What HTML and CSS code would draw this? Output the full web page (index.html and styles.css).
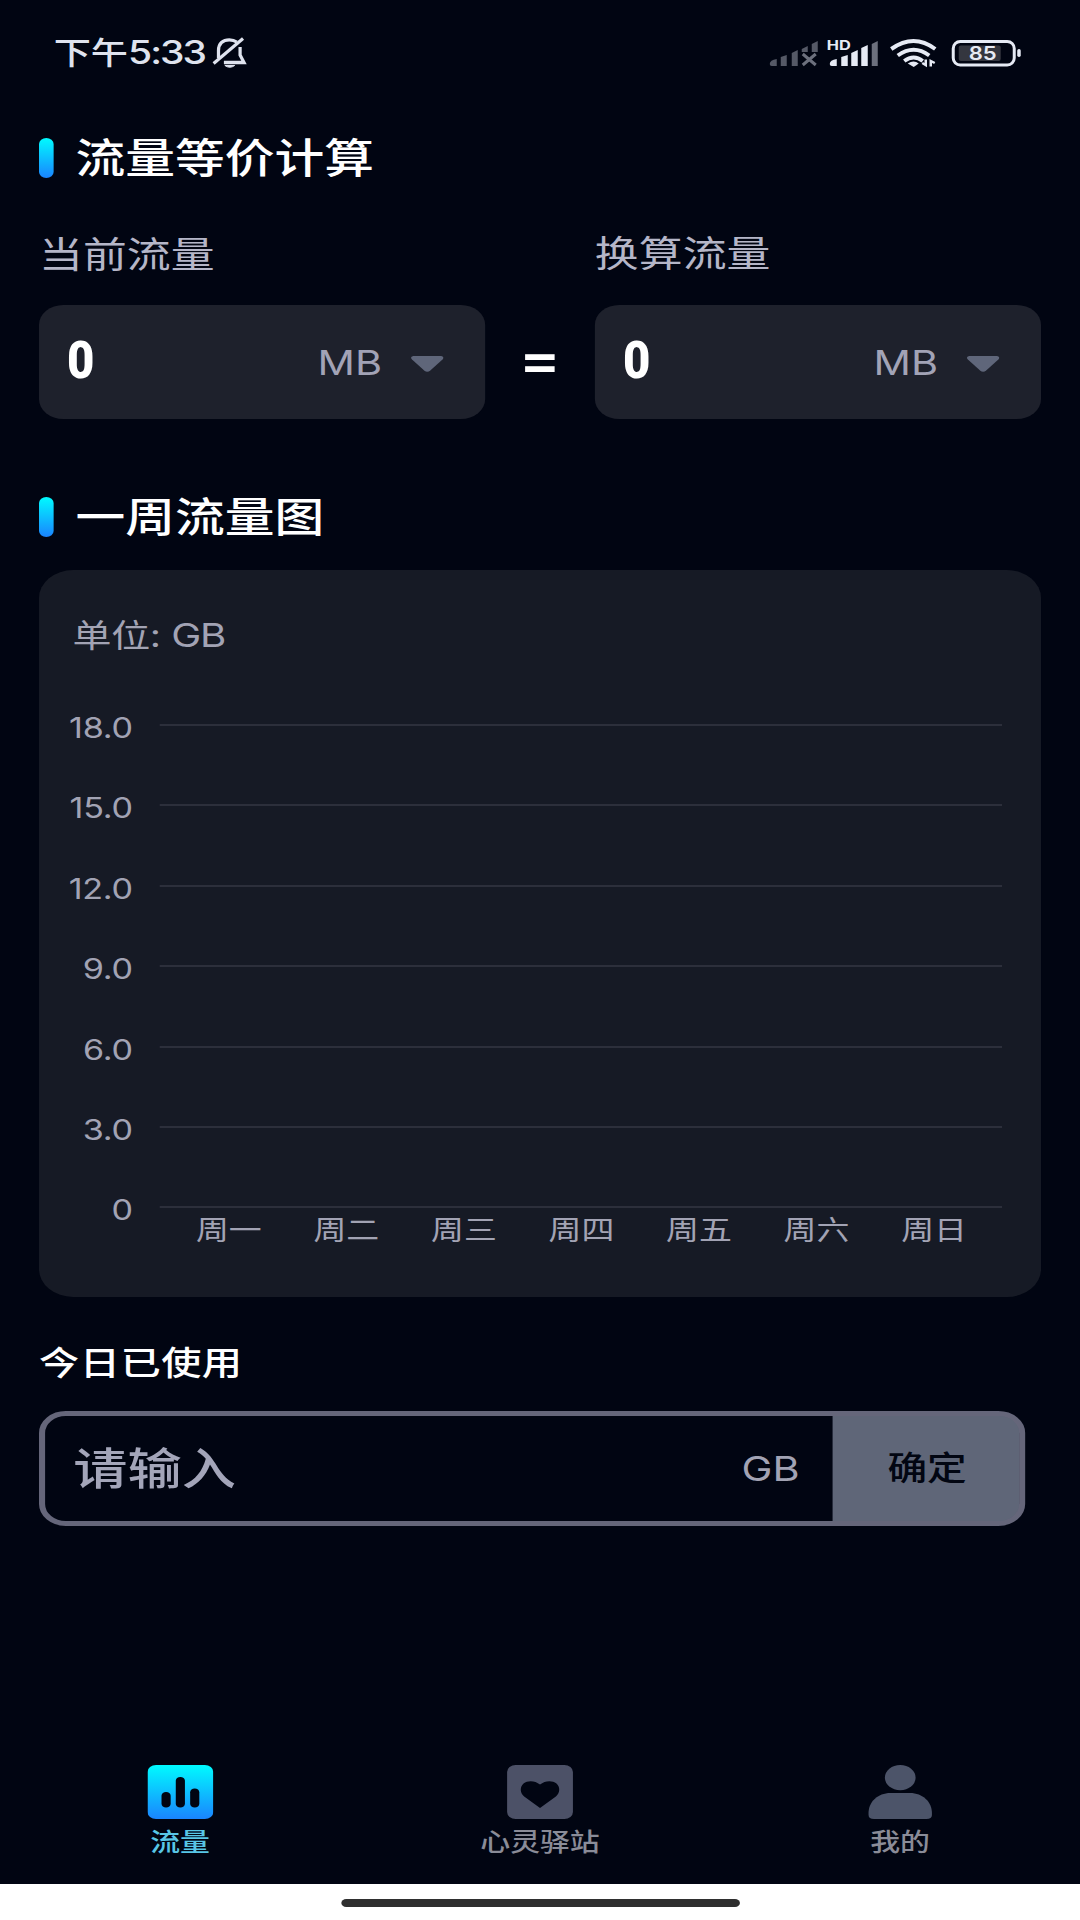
FILE: index.html
```html
<!doctype html>
<html lang="zh-CN">
<head>
<meta charset="utf-8">
<title>流量等价计算</title>
<link rel="stylesheet" href="styles.css">
</head>

<body>
<div class="phone">
    <!-- 状态栏 -->
    <div class="status">
        <div class="time">下午<span>5:33</span></div>
        <svg class="bell" viewBox="0 0 36 32" preserveAspectRatio="none" fill="none" stroke="#dfe3ee" stroke-width="3.300">
            <path d="M6.500 21V13.500C6.500 6.500 11 2.800 17.500 2.800C20.500 2.800 23 3.500 25 5M28.500 10V18L32.500 25.500H12"/>
            <path d="M1.500 26.500L31.500 1.500"/>
            <path d="M13 28.500H23Q18 32 13 28.500Z" fill="#dfe3ee" stroke-width="1"/>
        </svg>
        <svg class="signs" viewBox="0 0 256 40" preserveAspectRatio="none">
            <g transform="translate(0 5)">
            <g fill="#555966">
                <path d="M3 26Q3 22 10 21V28H5Q3 28 3 26Z"/>
                <path d="M14 19L20 17V28H14ZM25 15L31 12V28H25ZM35 11L41 8V14H35ZM45 6L51 3V14H45Z"/>
            </g>
            <path d="M36 16L49 27M49 16L36 27" stroke="#6c707d" stroke-width="3"/>
            <text class="hd" x="60" y="12" textLength="24" lengthAdjust="spacingAndGlyphs">HD</text>
            <g fill="#e6eaf4">
                <path d="M63 26Q63 22 70 21V28H65Q63 28 63 26Z"/>
                <path d="M74.500 19L81 17V28H74.500ZM84.500 15L91 12V28H84.500ZM94.500 10L101 7V28H94.500Z"/>
            </g>
            <path d="M105 6L111 3V28H105Z" fill="#6c707d"/>
            <g fill="none" stroke="#e6eaf4" stroke-width="4">
                <path d="M124.500 11Q147 -5 168.500 11"/>
                <path d="M131 17.500Q147 6 162.500 17.500"/>
                <path d="M137.500 23Q147 16 156 23"/>
            </g>
            <path d="M141 25.500Q147 21.500 152 25.500L147 29Z" fill="#e6eaf4"/>
            <path d="M155.500 25L159 27V21.500M164 28.500V23L168 25" fill="none" stroke="#e6eaf4" stroke-width="2.500"/>
            <rect x="186.500" y="3.500" width="61" height="23.500" rx="7" fill="none" stroke="#e6eaf4" stroke-width="3"/>
            <rect x="192" y="7.500" width="42" height="15.500" rx="2" fill="#34363f"/>
            <rect x="250.500" y="11" width="3.500" height="8" rx="1.700" fill="#e6eaf4"/>
            <text class="power" x="202" y="21.800" textLength="28" lengthAdjust="spacingAndGlyphs">85</text>
            </g>
        </svg>
    </div>

    <div class="main">
        <h2 class="title"><i></i>流量等价计算</h2>
        <div class="convert">
            <div class="col">
                <div class="label">当前流量</div>
                <div class="field">
                    <b>0</b>
                    <span>MB</span>
                    <svg class="arrow" viewBox="0 0 27 16"><path d="M2 0H25Q28 1 26 3.500L16 14.500Q13.500 17 11 14.500L1 3.500Q-1 1 2 0Z" fill="#5f667a"/></svg>
                </div>
            </div>
            <div class="equal">=</div>
            <div class="col">
                <div class="label up">换算流量</div>
                <div class="field">
                    <b>0</b>
                    <span>MB</span>
                    <svg class="arrow" viewBox="0 0 27 16"><path d="M2 0H25Q28 1 26 3.500L16 14.500Q13.500 17 11 14.500L1 3.500Q-1 1 2 0Z" fill="#5f667a"/></svg>
                </div>
            </div>
        </div>

        <h2 class="title week"><i></i>一周流量图</h2>
        <div class="card">
            <div class="unit">单位: <span>GB</span></div>
            <ul class="rows">
                <li><span>18.0</span><em></em></li>
                <li><span>15.0</span><em></em></li>
                <li><span>12.0</span><em></em></li>
                <li><span>9.0</span><em></em></li>
                <li><span>6.0</span><em></em></li>
                <li><span>3.0</span><em></em></li>
                <li><span>0</span><em></em></li>
            </ul>
            <ul class="days">
                <li>周一</li>
                <li>周二</li>
                <li>周三</li>
                <li>周四</li>
                <li>周五</li>
                <li>周六</li>
                <li>周日</li>
            </ul>
        </div>

        <div class="today">今日已使用</div>
        <div class="inputbox">
            <div class="ph">请输入</div>
            <div class="gb">GB</div>
            <div class="btn">确定</div>
        </div>
    </div>

    <!-- 底部导航 -->
    <div class="nav">
        <div class="item on">
            <svg viewBox="0 0 54 54">
                <defs><linearGradient id="blue" x1="0" y1="0" x2="0" y2="1"><stop offset="0" stop-color="#00fbff"/><stop offset="1" stop-color="#1a84ff"/></linearGradient></defs>
                <rect width="54" height="54" rx="7" fill="url(#blue)"/>
                <g fill="#010512"><rect x="11.500" y="27" width="7.500" height="15.500" rx="3.700"/><rect x="23.200" y="12" width="7.500" height="30.500" rx="3.700"/><rect x="35" y="23.500" width="7.500" height="19" rx="3.700"/></g>
            </svg>
            <p>流量</p>
        </div>
        <div class="item">
            <svg viewBox="0 0 54 54">
                <rect width="54" height="54" rx="7" fill="#4c5167"/>
                <path d="M27 43L14 31.500C10.500 28 10.300 22 13.500 18.500C17 15 23 15.500 27 19.500C31 15.500 37 15 40.500 18.500C43.700 22 43.500 28 40 31.500Z" fill="#010512"/>
            </svg>
            <p>心灵驿站</p>
        </div>
        <div class="item">
            <svg viewBox="0 0 54 54" fill="#4c5469">
                <circle cx="27.500" cy="12.600" r="12.600"/>
                <path d="M19.500 28H35.500C46 28 53.500 37 53.500 48V50Q53.500 54 49 54H6Q1.500 54 1.500 50V48C1.500 37 9 28 19.500 28Z"/>
            </svg>
            <p>我的</p>
        </div>
    </div>
    <div class="home"><i></i></div>
</div>
</body>
</html>
```

FILE: styles.css
```css
*{ margin:0; padding:0; list-style:none; box-sizing:border-box; font-style:normal;}
body{width:1080px;height:1920px;overflow:hidden;background:#010512;font-family:Inter,"Noto Sans CJK SC",sans-serif;}
/* 886宽的画布横向拉伸到1080 */
.phone{width:886px;height:1920px;display:flex;flex-direction:column;transform:scaleX(1.219);transform-origin:0 0;color:#a2a3b4;}

.status{height:108px;padding:0 47.5px 2px 44px;display:flex;align-items:center;color:#dfe3ee;}
.time{font-size:30.5px;line-height:40px;font-weight:500;white-space:nowrap;}
.time span{font-size:32px;letter-spacing:-1.6px;font-weight:500;}
.bell{width:29px;height:32px;margin-left:6px;}
.signs{width:210px;height:40px;margin-left:auto;}
.hd{font-size:13px;font-weight:700;fill:#e6eaf4;}
.power{font-size:19px;font-weight:600;fill:#e6eaf4;}

.main{padding:30px 32px 0;}
.title{height:41px;display:flex;align-items:center;font-size:40.8px;line-height:41px;font-weight:500;color:#fff;}
.title i{width:12px;height:40px;margin:-1px 18px 0 0;border-radius:6px;background:linear-gradient(#00fbff,#1a84ff);}
.convert{display:flex;margin-top:50px;}
.col{width:366px;}
.label{height:76px;font-size:36px;line-height:52px;font-weight:400;color:#b5b6c8;}
.up{line-height:50px;}
.field{height:114px;border-radius:20px;background:#1e212c;display:flex;align-items:center;padding:0 34.5px 0 23px;}
.field b{width:24px;font-family:Roboto,sans-serif;font-size:51px;line-height:60px;font-weight:900;color:#fff;transform:scaleX(.76);transform-origin:0 50%;margin-top:-3px;}
.field span{margin-left:auto;font-size:34px;font-weight:400;line-height:40px;color:#a2a3b6;margin-top:2px;}
.arrow{width:27px;height:16px;margin-left:23px;margin-top:3px;}
.equal{width:90px;padding-top:77px;text-align:center;font-family:Roboto,sans-serif;font-size:56px;line-height:112px;font-weight:600;color:#fff;}
.week{margin-top:78px;}

.card{height:727px;margin-top:32px;padding-top:45px;border-radius:28px;background:#161a25;}
.unit{padding-left:27.5px;font-size:32px;line-height:40px;font-weight:400;letter-spacing:-.3px;}
.unit span{font-size:33px;font-weight:400;letter-spacing:-1px;}
.rows{margin-top:68px;}
.rows li{height:80.4px;display:flex;align-items:flex-start;}
.rows li:last-child{height:11px;}
.rows span{width:76px;margin:-11px 22px 0 1px;text-align:right;font-size:28px;line-height:30px;font-weight:400;letter-spacing:-.2px;}
.rows em{width:691px;height:2px;background:#2c2f3b;}
.days{display:flex;padding:0 39.5px 0 107.5px;}
.days li{flex:1;text-align:center;font-size:27px;line-height:27px;}

.today{margin-top:46px;font-size:33px;line-height:40px;font-weight:500;letter-spacing:.4px;color:#fff;}
.inputbox{width:809px;height:115px;margin-top:28px;border:5px solid #65667a;border-radius:22px;background:linear-gradient(to left,#5f6678 40px,transparent 40px) border-box;display:flex;align-items:center;overflow:hidden;}
.ph{padding-left:23px;font-size:44.5px;line-height:60px;font-weight:500;color:#a3a5b9;}
.gb{margin-left:auto;padding-right:27px;font-size:34px;line-height:40px;font-weight:400;}
.btn{width:153px;height:115px;padding-left:2px;background:#5f6678;color:#020612;font-size:32.5px;line-height:115px;font-weight:500;text-align:center;flex:none;}

.nav{margin-top:auto;height:119px;display:flex;flex:none;}
.item{flex:1;text-align:center;color:#8a8c98;}
.item svg{display:block;width:54px;height:54px;margin:0 auto 9px;}
.item p{font-size:24.5px;line-height:28px;font-weight:500;}
.on{color:#58c6e6;}
.home{height:36px;flex:none;background:#fff;}
.home i{display:block;width:327px;height:8px;margin:0 auto;position:relative;top:15px;border-radius:4px;background:#2f2f2f;}
```
